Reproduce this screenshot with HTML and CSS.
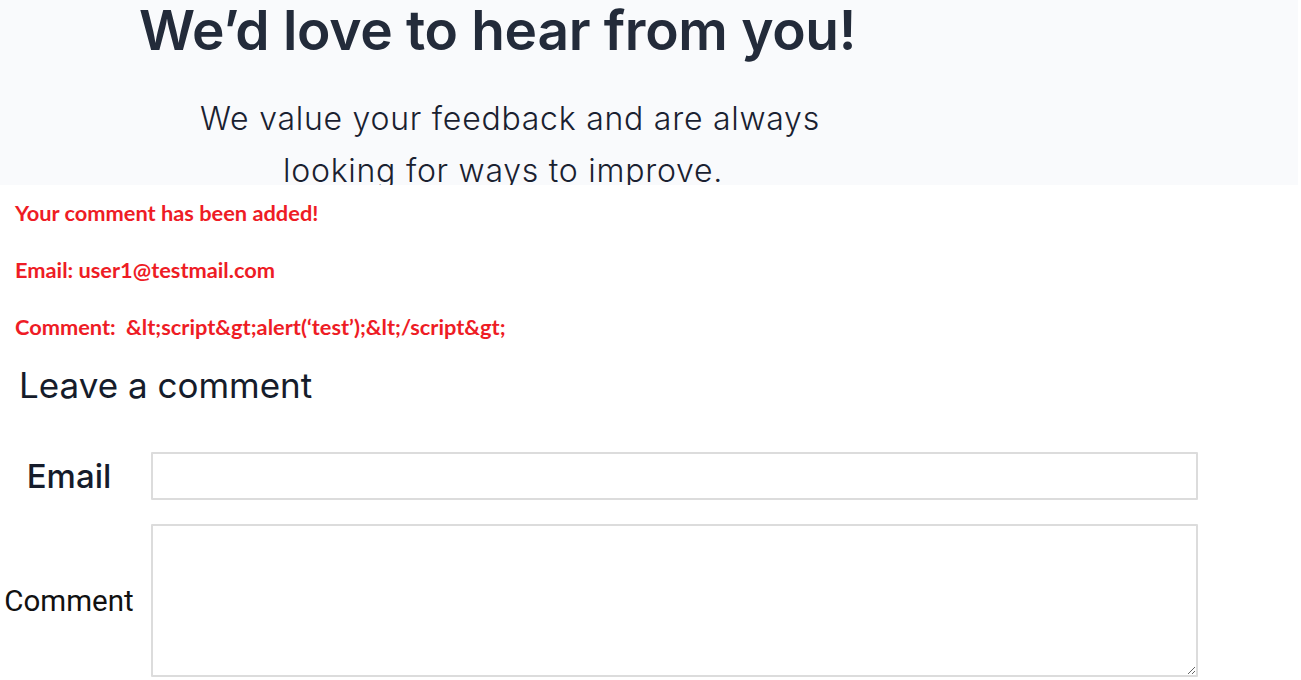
FILE: index.html
```html
<!DOCTYPE html>
<html lang="en">
<head>
<meta charset="utf-8">
<title>Contact</title>
<link rel="stylesheet" href="styles.css">
</head>
<body>
<header class="hero">
  <div class="hero-inner">
    <h1 class="hero-title">We’d love to hear from you!</h1>
    <p class="hero-sub"><span class="sub-line">We value your feedback and are always</span><span class="sub-line sub-line-2">looking for ways to improve.</span></p>
  </div>
</header>
<section class="notice">
  <p class="notice-line">Your comment has been added!</p>
  <p class="notice-line">Email: user1@testmail.com</p>
  <p class="notice-line">Comment: <span class="notice-value">&amp;lt;script&amp;gt;alert(‘test’);&amp;lt;/script&amp;gt;</span></p>
</section>
<section class="comment-form">
  <h2 class="form-title">Leave a comment</h2>
  <form class="form">
    <div class="form-row">
      <label class="form-label label-email" for="email">Email</label>
      <input class="form-input" id="email" type="text">
    </div>
    <div class="form-row">
      <label class="form-label label-comment" for="comment">Comment</label>
      <textarea class="form-textarea" id="comment"></textarea>
    </div>
  </form>
</section>
</body>
</html>
```
FILE: styles.css
```css
html, body {
  margin: 0;
  padding: 0;
  background: #ffffff;
}
body {
  font-family: Inter, "Noto Sans", sans-serif;
  color: #1f2633;
  width: 1301px;
  height: 680px;
  overflow: hidden;
}
.hero {
  width: 1298px;
  height: 185px;
  background: #f9fafc;
  overflow: hidden;
}
.hero-inner {
  width: 1000px;
  text-align: center;
}
.hero-title {
  margin: 0;
  padding-right: 5px;
  font-size: 55px;
  line-height: 60px;
  font-weight: 600;
  color: #232b3a;
  letter-spacing: -0.3px;
}
.hero-sub {
  margin: 34px 0 0 0;
  padding-left: 20px;
  font-size: 32px;
  line-height: 50px;
  font-weight: 300;
  letter-spacing: 0.75px;
  color: #1a2130;
}
.sub-line {
  display: block;
}
.sub-line-2 {
  margin-top: 2px;
  margin-right: 14px;
}
.notice {
  padding: 15px 0 0 15px;
}
.notice-line {
  margin: 0 0 32px 0;
  font-family: Lato, "Open Sans", sans-serif;
  font-weight: 700;
  font-size: 21.8px;
  line-height: 25px;
  color: #ee1c25;
}
.notice-line:last-child {
  margin-bottom: 0;
}
.notice-value {
  margin-left: 5px;
}
.comment-form {
  padding-top: 27px;
}
.form-title {
  margin: 0;
  padding-left: 19px;
  font-size: 35px;
  line-height: 38px;
  font-weight: 400;
  color: #151c2b;
}
.form {
  margin-top: 48px;
  display: flex;
  flex-direction: column;
  gap: 24px;
}
.form-row {
  display: flex;
  align-items: center;
  gap: 13px;
}
.form-label {
  width: 138px;
  text-align: center;
  flex: none;
}
.label-email {
  font-size: 33px;
  font-weight: 500;
  color: #151c2b;
}
.label-comment {
  font-family: Roboto, "Liberation Sans", sans-serif;
  font-size: 29.5px;
  font-weight: 400;
  color: #111111;
}
.form-input,
.form-textarea {
  box-sizing: border-box;
  width: 1047px;
  border: 2px solid #dcdcdc;
  border-radius: 1px;
  background: #ffffff;
  margin: 0;
  padding: 4px 8px;
  font-family: Inter, sans-serif;
  font-size: 16px;
  outline: none;
}
.form-input {
  height: 48px;
}
.form-textarea {
  height: 153px;
  resize: both;
}
```
